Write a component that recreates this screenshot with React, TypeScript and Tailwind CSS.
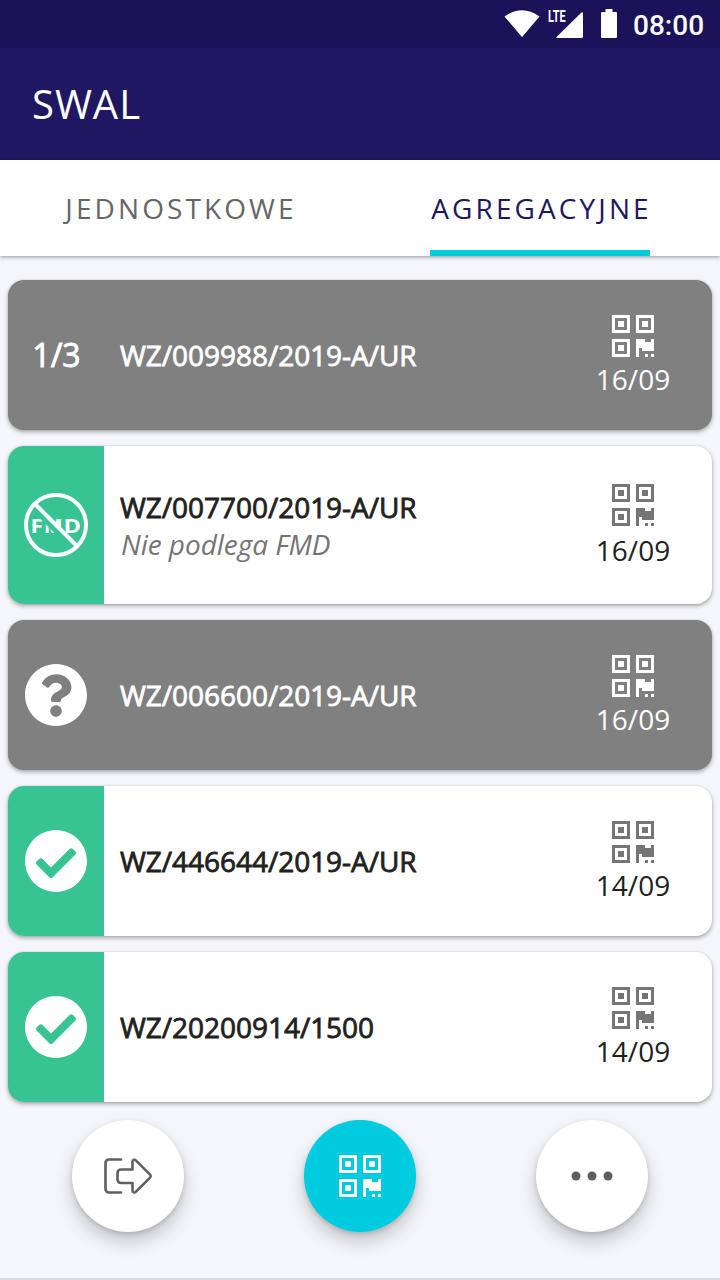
import type { ReactNode } from 'react';
import { FaCheckCircle, FaQuestionCircle } from 'react-icons/fa';

type Status = 'partial' | 'exempt' | 'unknown' | 'verified';

interface Document {
  number: string;
  status: Status;
  date: string;
  progress?: string;
  note?: string;
}

const documents: Document[] = [
  { number: 'WZ/009988/2019-A/UR', status: 'partial', date: '16/09', progress: '1/3' },
  { number: 'WZ/007700/2019-A/UR', status: 'exempt', date: '16/09', note: 'Nie podlega FMD' },
  { number: 'WZ/006600/2019-A/UR', status: 'unknown', date: '16/09' },
  { number: 'WZ/446644/2019-A/UR', status: 'verified', date: '14/09' },
  { number: 'WZ/20200914/1500', status: 'verified', date: '14/09' },
];

function QrIcon({ className = '' }: { className?: string }) {
  return (
    <svg viewBox="0 0 14 14" className={`h-[42px] w-[42px] ${className}`} fill="currentColor" fillRule="evenodd" shapeRendering="crispEdges">
      <path d="M0 0h6v6H0zM1 1v4h4V1zM2 2h2v2H2z" />
      <path d="M8 0h6v6H8zM9 1v4h4V1zM10 2h2v2h-2z" />
      <path d="M0 8h6v6H0zM1 9v4h4V9zM2 10h2v2H2z" />
      <path d="M8 8h3v1h2V8h1v4h-4v-1H9v3H8zM11 13h1v1h-1zM13 13h1v1h-1z" />
    </svg>
  );
}

function NoFmdIcon() {
  return (
    <svg viewBox="0 0 64 64" className="h-16 w-16">
      <text y="39.5" fill="#fff" className="font-['Open_Sans',sans-serif] text-[20px] font-bold">
        <tspan x="6.5" textLength="12.5" lengthAdjust="spacingAndGlyphs">F</tspan>
        <tspan x="20" textLength="18.5" lengthAdjust="spacingAndGlyphs">M</tspan>
        <tspan x="39.5" textLength="17.5" lengthAdjust="spacingAndGlyphs">D</tspan>
      </text>
      <path d="M8.500 14.500 49 55" stroke="#38c393" strokeWidth="5" />
      <circle cx="32" cy="32" r="30" fill="none" stroke="#fff" strokeWidth="4" />
      <path d="M11 11l42 42" stroke="#fff" strokeWidth="4" />
    </svg>
  );
}

function ExitIcon() {
  return (
    <svg viewBox="0 0 48 36" className="h-9 w-12" fill="none" stroke="#5f5f5f" strokeWidth="2.6" strokeLinecap="round" strokeLinejoin="round">
      <path d="M17 1.5H5a3.500 3.500 0 0 0-3.500 3.500v26a3.500 3.500 0 0 0 3.500 3.500h12" />
      <path d="M28.500 11.500h-11.500a3.500 3.500 0 0 0-3.500 3.500v6.500a3.500 3.500 0 0 0 3.500 3.500h11.500v7.500c0 2 2 2.600 3.300 1.300l14-14c1.200-1.200 1.200-2.200 0-3.400l-14-14c-1.300-1.300-3.300-.7-3.300 1.300z" />
    </svg>
  );
}

function StatusBar() {
  return (
    <div className="flex h-12 items-center bg-[#1b1259] pl-[504px] text-white">
      <svg viewBox="0 0 36 28" className="h-7 w-9" fill="currentColor">
        <path d="M.5 6.500Q18-6 35.500 6.500L18.500 26.500Q18 27.500 17.500 26.500z" />
      </svg>
      <div className="relative ml-[7px] h-7 w-9">
        <span className="absolute -top-px left-px origin-left scale-x-[0.64] font-['Roboto',sans-serif] text-[17px] leading-[15px] font-bold">LTE</span>
        <svg viewBox="0 0 36 28" className="h-7 w-9" fill="currentColor">
          <path d="M34.500 2.500q1.500-1 1.500 1v23q0 1.500-1.500 1.500h-24q-2 0-.5-1.500z" />
        </svg>
      </div>
      <svg viewBox="0 0 16 30" className="mb-[2px] ml-[18px] h-[30px] w-4" fill="currentColor">
        <path d="M4.500 1h7v3H15q1 0 1 1v24q0 1-1 1H1q-1 0-1-1V5q0-1 1-1h3.500z" />
      </svg>
      <span className="mt-[3px] ml-4 font-['Roboto',sans-serif] text-[28px] leading-8 font-medium">08:00</span>
    </div>
  );
}

function StatusBadge({ document }: { document: Document }) {
  if (document.status === 'partial') {
    return <span className="pl-px text-[32px] [-webkit-text-stroke:0.8px_currentColor]">{document.progress}</span>;
  }
  if (document.status === 'exempt') {
    return <NoFmdIcon />;
  }
  if (document.status === 'unknown') {
    return <FaQuestionCircle className="h-16 w-16" />;
  }
  return <FaCheckCircle className="h-16 w-16" />;
}

function DocumentCard({ document }: { document: Document }) {
  const pending = document.status === 'partial' || document.status === 'unknown';

  return (
    <div
      className={`flex overflow-hidden rounded-[16px] shadow-[0_2px_4px_rgba(0,0,0,0.32),0_0_2px_rgba(0,0,0,0.12)] ${
        document.note ? 'h-[158px]' : 'h-[150px]'
      } ${pending ? 'bg-[#808080] text-white' : 'bg-white text-[#212121]'}`}
    >
      <div className={`flex w-24 items-center justify-center text-white ${pending ? '' : 'bg-[#38c393]'}`}>
        <StatusBadge document={document} />
      </div>
      <div className={`flex flex-1 flex-col justify-center pl-4 ${document.note ? 'pt-[2px]' : ''}`}>
        <div className="text-[28px] leading-[37px] tracking-[-0.03px] [-webkit-text-stroke:0.8px_currentColor]">{document.number}</div>
        {document.note && <div className="pl-px text-[28px] leading-[37px] tracking-[-0.05px] text-[#757575] italic">{document.note}</div>}
      </div>
      <div className="flex w-[158px] flex-col items-center justify-center pt-[3px]">
        <QrIcon className={pending ? 'text-white' : 'text-[#757575]'} />
        <span className={`text-[28px] leading-[38px] ${document.note ? 'mt-[5px]' : 'mt-[3px]'}`}>{document.date}</span>
      </div>
    </div>
  );
}

function RoundButton({ label, primary, children }: { label: string; primary?: boolean; children: ReactNode }) {
  return (
    <button
      aria-label={label}
      className={`flex h-28 w-28 items-center justify-center rounded-full shadow-[0_10px_18px_rgba(0,0,0,0.2),0_2px_5px_rgba(0,0,0,0.14)] ${
        primary ? 'bg-[#00cbdf] text-white' : 'bg-white text-[#5f5f5f]'
      }`}
    >
      {children}
    </button>
  );
}

export default function App() {
  return (
    <div className="flex h-[1280px] w-[720px] flex-col overflow-hidden border-b-2 border-[#d8d9db] bg-[#f5f6fb] font-['Open_Sans',sans-serif]">
      <StatusBar />
      <header className="flex h-28 items-center bg-[#1f1762] pl-8 text-[40px] tracking-[1px] text-white">SWAL</header>
      <nav className="z-10 flex h-24 bg-white text-[28px] tracking-[3.1px] shadow-[0_1px_4px_rgba(0,0,0,0.4)]">
        <button className="flex w-1/2 items-center justify-center pl-[2px] text-[#666]">JEDNOSTKOWE</button>
        <button className="flex w-1/2 justify-center text-[#1f1762]">
          <span className="flex h-24 w-[220px] items-center justify-center border-b-6 border-[#00cbdb] pt-[6px] pl-[3px]">AGREGACYJNE</span>
        </button>
      </nav>
      <main className="flex flex-col gap-4 px-2 pt-6">
        {documents.map((document) => (
          <DocumentCard key={document.number} document={document} />
        ))}
      </main>
      <footer className="flex justify-between px-[72px] pt-[18px]">
        <RoundButton label="Wyjdź">
          <ExitIcon />
        </RoundButton>
        <RoundButton label="Skanuj" primary>
          <QrIcon />
        </RoundButton>
        <RoundButton label="Więcej">
          <svg viewBox="0 0 42 10" className="h-[10px] w-[42px]" fill="currentColor">
            <circle cx="5" cy="5" r="4.500" />
            <circle cx="21" cy="5" r="4.500" />
            <circle cx="37" cy="5" r="4.500" />
          </svg>
        </RoundButton>
      </footer>
    </div>
  );
}
